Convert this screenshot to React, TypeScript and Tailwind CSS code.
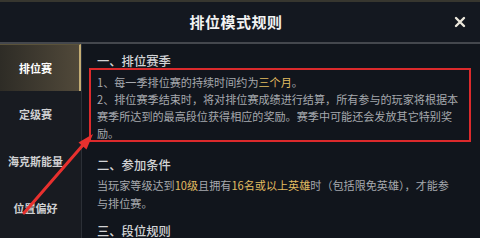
import React from 'react'

const tabs = ['排位赛', '定级赛', '海克斯能量', '位置偏好']

function Gold({ children }: { children: React.ReactNode }) {
  return <span className="text-[#e2bd62]">{children}</span>
}

export default function App() {
  return (
    <div className="relative w-[480px] h-[238px] overflow-hidden bg-[#11151c] font-['Noto_Sans_CJK_SC','Noto_Sans',sans-serif]">
      {/* header */}
      <div className="relative h-[44px] flex items-center justify-center bg-[#141820] border-t-2 border-[#37362f] border-b-2 border-b-[#44474d]">
        <h1 className="text-[15px] font-bold text-[#f2f2f2] tracking-[0.5px] ml-[-8px]">排位模式规则</h1>
        <button className="absolute right-[14px] top-[14px] text-[#ece8dc]">
          <svg width="12" height="12" viewBox="0 0 12 12">
            <path d="M2 2 L10 10 M10 2 L2 10" stroke="currentColor" strokeWidth="2.4" strokeLinecap="round" />
          </svg>
        </button>
      </div>

      <div className="flex h-[194px]">
        {/* sidebar */}
        <div className="w-[82px] shrink-0 bg-[#181b21] border-r border-[#2b2f36]">
          {tabs.map((t, i) => (
            <div
              key={t}
              className={
                i === 0
                  ? 'h-[47px] flex items-center justify-center pr-[8px] whitespace-nowrap text-[11px] font-bold text-white bg-gradient-to-r from-[#2e2c26] to-[#51493a] border-r-2 border-[#c4ad74] border-t border-t-[#5a523a]'
                  : 'h-[47px] flex items-center justify-center pr-[10px] whitespace-nowrap text-[11px] font-bold text-[#cfd0d2]'
              }
            >
              {t}
            </div>
          ))}
        </div>

        {/* content */}
        <div className="flex-1 pl-[15px] pt-[9px] text-[11.1px] leading-[17px] text-[#a6a9ae]">
          <h2 className="text-[12.3px] leading-[17px] font-medium text-[#d2d3d5]">一、排位赛季</h2>
          <p className="mt-[4px]">
            1、每一季排位赛的持续时间约为<Gold>三个月</Gold>。
            <br />
            2、排位赛季结束时，将对排位赛成绩进行结算，所有参与的玩家将根据本
            <br />
            赛季所达到的最高段位获得相应的奖励。赛季中可能还会发放其它特别奖
            <br />
            励。
          </p>

          <h2 className="mt-[15px] text-[12.3px] leading-[17px] font-medium text-[#d2d3d5]">二、参加条件</h2>
          <p className="mt-[2px] leading-[18px]">
            当玩家等级达到<Gold>10级</Gold>且拥有<Gold>16名或以上英雄</Gold>时（包括限免英雄），才能参
            <br />
            与排位赛。
          </p>

          <h2 className="mt-[11px] text-[12.3px] leading-[17px] font-medium text-[#d2d3d5]">三、段位规则</h2>
        </div>
      </div>

      {/* annotation: red box */}
      <div className="absolute left-[89px] top-[68px] w-[382px] h-[74px] border-2 border-[#dc2a2c] pointer-events-none" />

      {/* annotation: arrow */}
      <svg className="absolute left-0 top-0 pointer-events-none" width="480" height="238" viewBox="0 0 480 238">
        <line x1="24" y1="213" x2="83" y2="145" stroke="#e8302e" strokeWidth="3" strokeLinecap="round" />
        <polygon points="93,134 86.5,149.5 78.5,142.5" fill="#e8302e" />
      </svg>
    </div>
  )
}
